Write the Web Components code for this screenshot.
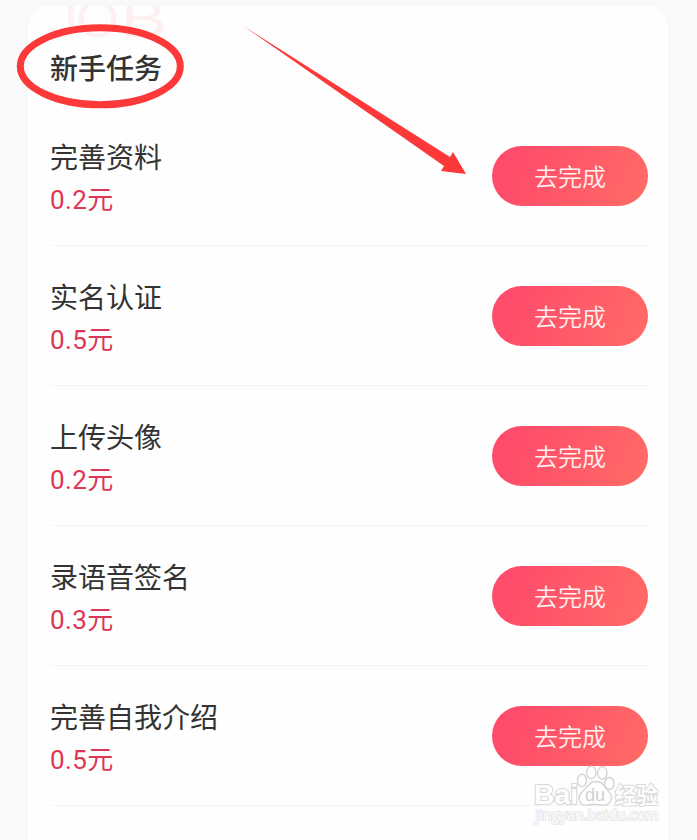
<!DOCTYPE html>
<html lang="zh-CN">
<head>
<meta charset="utf-8">
<title>新手任务</title>
<style>
  body{
    margin: 0;
    height: 840px;
    overflow: hidden;
    background: #fafafa;
    font-family: Roboto, "Noto Sans CJK SC", sans-serif;
    --fontTitle: 28px;
    --colorText: #333;
    --colorPrice: #dd3653;
  }
</style>
</head>
<body>
<task-page></task-page>
<script>
const buttonTemplate = document.createElement('template');
buttonTemplate.innerHTML = `
<style>
  :host{
    display: block;
    flex: none;
  }

  button{
    display: block;
    width: 156px;
    height: 60px;
    margin: 0;
    padding: 0 0 1px;
    border: 0;
    border-radius: 30px;
    color: #fff1f2;
    font: 350 24px/59px "Noto Sans CJK SC", sans-serif;
    background: linear-gradient(110deg, #ff4c6a 15%, #ff6a66 95%);
  }
</style>
<button type="button"><slot></slot></button>
`;

class TaskButton extends HTMLElement {
  constructor() {
    super();

    this.attachShadow({ mode: 'open' });
    this.shadowRoot.appendChild(buttonTemplate.content.cloneNode(true));
  }
}

customElements.define('task-button', TaskButton);

const itemTemplate = document.createElement('template');
itemTemplate.innerHTML = `
<style>
  :host{
    display: flex;
    justify-content: space-between;
    align-items: center;
    box-sizing: border-box;
    height: 140px;
    padding-right: 1px;
    border-bottom: 1px solid #f3f3f3;
  }

  .info{
    padding-top: 8px;
    margin-left: -1px;
  }

  .name{
    font-size: var(--fontTitle);
    line-height: 42px;
    color: var(--colorText);
  }

  .price{
    font-size: 26px;
    line-height: 41px;
    letter-spacing: .4px;
    color: var(--colorPrice);
  }
</style>
<div class="info">
  <div class="name"><slot></slot></div>
  <div class="price"></div>
</div>
<task-button>去完成</task-button>
`;

class TaskItem extends HTMLElement {
  constructor() {
    super();

    this.attachShadow({ mode: 'open' });
    this.shadowRoot.appendChild(itemTemplate.content.cloneNode(true));

    this.$price = this.shadowRoot.querySelector('.price');
  }

  static get observedAttributes() {
    return ['price'];
  }

  attributeChangedCallback(name, oldValue, newValue) {
    this.$price.textContent = `${newValue}元`;
  }
}

customElements.define('task-item', TaskItem);

const cardTemplate = document.createElement('template');
cardTemplate.innerHTML = `
<style>
  :host{
    display: block;
    position: relative;
    box-sizing: border-box;
    height: 860px;
    padding: 43px 19px 0 23px;
    overflow: hidden;
    border-radius: 20px;
    background: #fefefe;
  }

  .backdrop{
    position: absolute;
    left: 0;
    top: 0;
  }

  h1{
    position: relative;
    margin: 0 0 15px -1px;
    font-size: var(--fontTitle);
    line-height: 42px;
    font-weight: 500;
    color: var(--colorText);
  }
</style>
<svg class="backdrop" width="160" height="50" fill="#fdf0f1" font-family="Liberation Sans, sans-serif" font-size="52">
  <text x="21" y="31" textLength="29" lengthAdjust="spacingAndGlyphs">J</text>
  <text x="48" y="31" textLength="43" lengthAdjust="spacingAndGlyphs">O</text>
  <text x="93" y="31" textLength="46" lengthAdjust="spacingAndGlyphs">B</text>
</svg>
<h1><slot name="title"></slot></h1>
<slot></slot>
`;

class TaskCard extends HTMLElement {
  constructor() {
    super();

    this.attachShadow({ mode: 'open' });
    this.shadowRoot.appendChild(cardTemplate.content.cloneNode(true));
  }
}

customElements.define('task-card', TaskCard);

const marksTemplate = document.createElement('template');
marksTemplate.innerHTML = `
<style>
  :host{
    position: absolute;
    left: 0;
    top: 0;
    pointer-events: none;
  }

  svg{
    display: block;
  }
</style>
<svg width="480" height="190" fill="#fc3838">
  <ellipse cx="100.3" cy="66.3" rx="80" ry="38.5" fill="none" stroke="#fc3838" stroke-width="7"/>
  <path d="M243.5 26 L450 157 L453 152 L466 174 L441 171 L444 166 Z"/>
</svg>
`;

class PenMarks extends HTMLElement {
  constructor() {
    super();

    this.attachShadow({ mode: 'open' });
    this.shadowRoot.appendChild(marksTemplate.content.cloneNode(true));
  }
}

customElements.define('pen-marks', PenMarks);

const watermarkTemplate = document.createElement('template');
watermarkTemplate.innerHTML = `
<style>
  :host{
    position: absolute;
    left: 530px;
    top: 762px;
    pointer-events: none;
  }

  svg{
    display: block;
  }

  text{
    paint-order: stroke;
  }
</style>
<svg width="140" height="70" fill="#fefefe" stroke="#d9d9d9">
  <text x="4" y="42" font-family="Liberation Sans, sans-serif" font-weight="700" font-size="27" textLength="44" lengthAdjust="spacingAndGlyphs" stroke-width="2.2">Bai</text>
  <g stroke="#d2d2d2" stroke-width="1.3">
    <ellipse cx="52" cy="18.5" rx="4.5" ry="6.3"/>
    <ellipse cx="61.3" cy="10.5" rx="4.7" ry="6.3"/>
    <ellipse cx="72.3" cy="11" rx="4.7" ry="6.3"/>
    <ellipse cx="79.3" cy="21.5" rx="4.7" ry="6"/>
    <path d="M65.5 19.5 C59 19.5 58 25 54 28 C49 32 48 36 50 40 C52 44 57 43.5 61 42.500 C65 42 68 42.500 72 43 C78 43.5 81 41 81.5 36 C82 31 77 29 75 25 C73 21 70 19.5 65.5 19.5Z"/>
  </g>
  <text x="55" y="39" font-family="Liberation Sans, sans-serif" font-size="18" fill="#d0d0d0" stroke="none">du</text>
  <text x="85" y="41" font-family="Noto Sans CJK SC, sans-serif" font-weight="700" font-size="21.5" stroke-width="2">经验</text>
  <text x="5.5" y="58" font-family="Open Sans, sans-serif" font-size="14.5" textLength="123" lengthAdjust="spacingAndGlyphs" stroke-width="1.6" stroke="#e2e2e2">jingyan.baidu.com</text>
</svg>
`;

class PageWatermark extends HTMLElement {
  constructor() {
    super();

    this.attachShadow({ mode: 'open' });
    this.shadowRoot.appendChild(watermarkTemplate.content.cloneNode(true));
  }
}

customElements.define('page-watermark', PageWatermark);

const pageTemplate = document.createElement('template');
pageTemplate.innerHTML = `
<style>
  :host{
    display: block;
    position: relative;
    box-sizing: border-box;
    height: 840px;
    padding: 6px 29px 0 28px;
    overflow: hidden;
  }

  task-card{
    box-shadow: 0 0 14px rgba(0, 0, 0, .025);
  }
</style>
<task-card>
  <span slot="title">新手任务</span>
  <task-item price="0.2">完善资料</task-item>
  <task-item price="0.5">实名认证</task-item>
  <task-item price="0.2">上传头像</task-item>
  <task-item price="0.3">录语音签名</task-item>
  <task-item price="0.5">完善自我介绍</task-item>
</task-card>
<pen-marks></pen-marks>
<page-watermark></page-watermark>
`;

class TaskPage extends HTMLElement {
  constructor() {
    super();

    this.attachShadow({ mode: 'open' });
    this.shadowRoot.appendChild(pageTemplate.content.cloneNode(true));
  }
}

customElements.define('task-page', TaskPage);
</script>
</body>
</html>
